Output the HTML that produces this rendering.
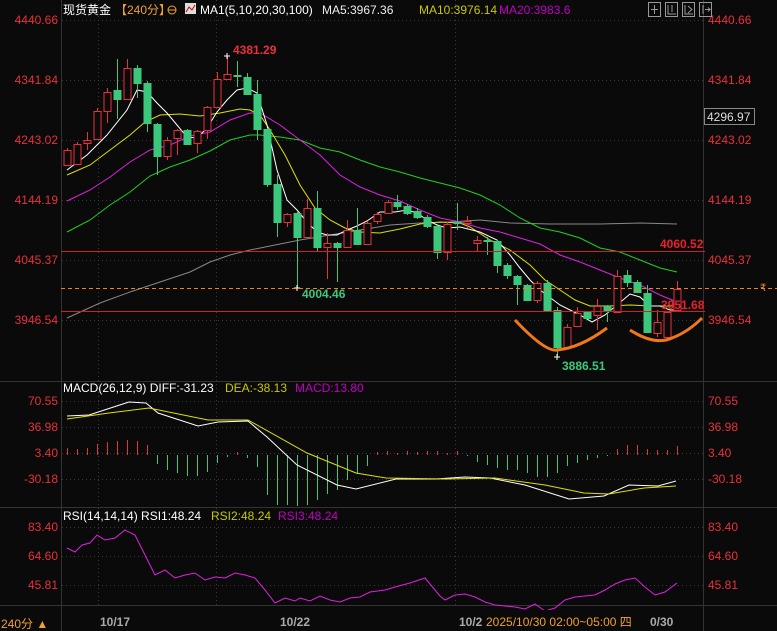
<!DOCTYPE html>
<html><head><meta charset="utf-8"><style>
html,body{margin:0;padding:0;background:#0a0a0a;overflow:hidden}
#c{position:relative;width:777px;height:631px;font-family:"Liberation Sans","Noto Sans CJK SC",sans-serif}
svg{position:absolute;left:0;top:0}
</style></head><body><div id="c">
<svg id="s" width="777" height="631" xmlns="http://www.w3.org/2000/svg" font-family="Liberation Sans, Noto Sans CJK SC, sans-serif">
<rect width="777" height="631" fill="#0a0a0a"/>
<g id="grid" stroke="#3a3a3a" stroke-dasharray="1,3" stroke-width="1"></g>
<g stroke="#333" stroke-width="1">
<line x1="61.5" y1="0" x2="61.5" y2="631"/><line x1="703.5" y1="0" x2="703.5" y2="631"/>
<line x1="0" y1="381.5" x2="777" y2="381.5"/><line x1="0" y1="507.5" x2="777" y2="507.5"/><line x1="0" y1="605.5" x2="777" y2="605.5"/>
</g>
<g id="lines" fill="none" stroke-width="1"></g>
<g id="cand"></g>
<line x1="61" y1="251.5" x2="705" y2="251.5" stroke="#d02020"/>
<line x1="61" y1="311.5" x2="705" y2="311.5" stroke="#d02020"/>
<line x1="61" y1="288.5" x2="777" y2="288.5" stroke="#f08020" stroke-dasharray="4,3"/>
<path d="M515 320 Q545 352 557 350 Q580 348 607 328" stroke="#f07818" stroke-width="3" fill="none"/>
<path d="M630 330 Q655 346 672 338 Q688 332 702 318" stroke="#f07818" stroke-width="3" fill="none"/>
<g id="macd"></g>
<g font-size="12" fill="#e8303c" text-anchor="end">
<text x="58" y="24">4440.66</text><text x="58" y="84">4341.84</text><text x="58" y="144">4243.02</text><text x="58" y="204">4144.19</text><text x="58" y="264">4045.37</text><text x="58" y="324">3946.54</text>
<text x="58" y="405">70.55</text><text x="58" y="431">36.98</text><text x="58" y="457">3.40</text><text x="58" y="483">-30.18</text>
<text x="58" y="531">83.40</text><text x="58" y="560">64.60</text><text x="58" y="589">45.81</text>
</g>
<g font-size="12" fill="#e8303c">
<text x="708" y="24">4440.66</text><text x="708" y="84">4341.84</text><text x="708" y="144">4243.02</text><text x="708" y="204">4144.19</text><text x="708" y="264">4045.37</text><text x="708" y="324">3946.54</text>
<text x="708" y="405">70.55</text><text x="708" y="431">36.98</text><text x="708" y="457">3.40</text><text x="708" y="483">-30.18</text>
<text x="708" y="531">83.40</text><text x="708" y="560">64.60</text><text x="708" y="589">45.81</text>
</g>
<rect x="704.5" y="108.5" width="50" height="16" fill="#0a0a0a" stroke="#888"/>
<text x="707" y="121" font-size="12" fill="#ddd">4296.97</text>
<text x="760" y="291" font-size="10" fill="#f08020">₹</text>
<g font-size="12" font-weight="bold">
<text x="233" y="54" fill="#e8303c">4381.29</text>
<text x="302" y="298" fill="#3cc87c">4004.46</text>
<text x="562" y="370" fill="#3cc87c">3886.51</text>
<text x="660" y="248" fill="#e8202c">4060.52</text>
<text x="661" y="309" fill="#e8202c">3951.68</text>
</g>
<g font-size="12">
<text x="63" y="14" fill="#fff">现货黄金</text><text x="115" y="14" fill="#f0a030">【240分】</text>
<circle cx="172" cy="10" r="4" fill="none" stroke="#f0a030"/><line x1="168" y1="10" x2="176" y2="10" stroke="#f0a030"/>
<rect x="185" y="3" width="11" height="11" fill="#ddd"/><path d="M186 12 L189 7 L192 10 L195 5" stroke="#c00" fill="none"/>
<text x="200" y="14" fill="#fff">MA1(5,10,20,30,100)</text><text x="322" y="14" fill="#eee">MA5:3967.36</text>
<text x="419" y="14" fill="#c8c800">MA10:3976.14</text><text x="499" y="14" fill="#c000c0">MA20:3983.6</text>
<text x="63" y="392" fill="#fff">MACD(26,12,9) DIFF:-31.23</text><text x="225" y="392" fill="#c8c800">DEA:-38.13</text><text x="295" y="392" fill="#c000c0">MACD:13.80</text>
<text x="63" y="520" fill="#fff">RSI(14,14,14) RSI1:48.24</text><text x="211" y="520" fill="#c8c800">RSI2:48.24</text><text x="278" y="520" fill="#c000c0">RSI3:48.24</text>
<text x="1" y="628" fill="#f0a030">240分 ▲</text>
<text x="100" y="626" fill="#aaa" font-weight="bold">10/17</text><text x="280" y="626" fill="#aaa" font-weight="bold">10/22</text><text x="459" y="626" fill="#aaa" font-weight="bold">10/2</text>
<rect x="484" y="610" width="166" height="20" fill="#0a0a0a"/>
<text x="486" y="626" fill="#f0a030">2025/10/30 02:00~05:00 四</text><text x="650" y="626" fill="#aaa" font-weight="bold">0/30</text>
</g>
<g fill="none" stroke="#999">
<rect x="648.5" y="2.5" width="12" height="14"/><rect x="665.5" y="2.5" width="12" height="14"/><rect x="682.5" y="2.5" width="12" height="14"/><rect x="699.5" y="2.5" width="12" height="14"/>
<path d="M654.5 5v9M651 9.5h7M668 5v9h8M672 5v7M685 5v9h8M688 6l4 3.5-4 3.5M703 5v9M705 9.5h5l-2-2M708 11.5l2-2"/>
</g>
</svg></div>
<script>
const NS="http://www.w3.org/2000/svg";
function el(p,t,a){const e=document.createElementNS(NS,t);for(const k in a)e.setAttribute(k,a[k]);document.getElementById(p).appendChild(e);return e;}
[20,80,140,200,260,320,401,427,453,479,527,556,585].forEach(y=>el("grid","line",{x1:62,x2:703,y1:y+.5,y2:y+.5}));
[98,216,455].forEach(x=>el("grid","line",{x1:x+.5,x2:x+.5,y1:0,y2:605}));
function pl(pts,c,w){el("lines","polyline",{points:pts.map(p=>p.join(",")).join(" "),stroke:c,"stroke-width":w||1});}
pl([[67,318],[100,303],[130,292],[160,282],[190,272],[210,262],[230,255],[250,250],[270,246],[300,240],[330,235],[360,230],[390,225],[420,223],[450,222],[480,220],[510,223],[550,224],[600,224],[640,223],[677,224]],"#888");
pl([[67,232],[90,220],[110,205],[130,192],[150,176],[170,167],[190,160],[210,151],[230,140],[250,135],[260,135],[280,137],[300,140],[320,148],[340,152],[360,160],[380,167],[400,172],[420,178],[440,183],[460,188],[480,195],[500,205],[520,218],[540,228],[560,232],[580,238],[600,248],[620,252],[640,260],[660,268],[677,272]],"#20d020");
pl([[67,201],[90,190],[110,177],[130,162],[150,150],[170,145],[190,136],[210,132],[230,120],[250,113],[260,113],[280,125],[300,140],[320,155],[340,175],[360,187],[380,195],[400,201],[420,210],[440,218],[460,222],[480,228],[500,232],[520,238],[540,244],[560,255],[580,262],[600,270],[620,278],[640,285],[660,295],[677,302]],"#e020e0");
pl([[67,175],[90,165],[110,150],[130,135],[145,122],[160,115],[180,114],[200,116],[220,113],[240,109],[250,110],[260,115],[270,130],[285,155],[300,185],[315,208],[330,220],[345,228],[360,232],[380,233],[400,229],[420,224],[440,222],[460,223],[470,227],[490,240],[510,250],[530,265],[545,280],[560,290],[575,300],[590,306],[610,306],[630,305],[650,306],[670,306],[677,305]],"#e0e000");
pl([[67,170],[87,155],[107,135],[127,110],[137,90],[147,92],[157,103],[167,113],[177,125],[187,137],[197,138],[207,128],[217,112],[227,100],[237,90],[247,88],[257,93],[267,125],[277,170],[287,200],[297,210],[307,222],[317,232],[327,235],[337,235],[347,230],[357,226],[367,221],[380,212],[395,212],[407,210],[417,213],[427,220],[437,225],[447,228],[460,227],[480,232],[497,240],[510,255],[520,268],[530,280],[540,290],[560,305],[580,315],[592,322],[605,315],[617,305],[630,294],[640,297],[650,306],[660,306],[670,310],[677,310]],"#fff");
// x, open, close, high, low (pixel y)
const C=[[67,165,150,148,166],[77,164,144,142,165],[87,143,140,132,150],[97,139,111,108,140],[107,111,92,88,123],[117,90,99,59,119],[127,99,68,59,100],[137,68,83,65,98],[147,83,123,81,132],[157,124,156,123,175],[167,156,140,137,160],[177,138,130,129,155],[187,130,144,129,145],[197,143,131,130,153],[207,130,107,106,139],[217,107,79,72,108],[227,79,74,56,80],[237,75,76,61,87],[247,77,94,73,95],[257,94,129,80,140],[267,129,184,128,187],[277,184,222,175,237],[287,222,214,213,227],[297,213,237,212,288],[307,237,208,199,238],[317,208,247,191,252],[327,247,243,233,279],[337,243,247,242,282],[347,247,230,220,248],[357,230,244,208,245],[367,244,223,221,245],[377,221,214,212,224],[388,213,202,200,214],[397,202,206,195,210],[407,206,213,204,215],[417,211,217,208,219],[427,217,226,215,228],[437,226,252,224,259],[447,252,224,222,260],[457,222,222,203,230],[467,223,221,216,228],[477,243,240,236,252],[487,240,241,237,255],[497,241,265,240,273],[507,265,275,263,279],[517,276,284,275,305],[527,285,300,284,301],[537,300,283,281,303],[547,283,310,280,311],[557,310,347,307,357],[567,347,327,324,348],[577,326,313,307,327],[587,312,318,311,319],[597,315,306,299,330],[607,306,310,305,322],[617,312,276,270,313],[627,275,282,270,287],[637,282,292,280,293],[647,293,332,285,333],[657,333,322,310,337],[667,337,312,311,337],[677,310,289,281,311]];
C.forEach(([x,o,c,h,l])=>{const up=c<o,col=up?"#e8303c":"#3cc87c";
el("cand","line",{x1:x+.5,x2:x+.5,y1:h,y2:Math.min(o,c),stroke:col});
el("cand","line",{x1:x+.5,x2:x+.5,y1:Math.max(o,c),y2:l,stroke:col});
const t=Math.min(o,c),hh=Math.max(1,Math.abs(o-c));
if(up)el("cand","rect",{x:x-3,y:t+.5,width:7,height:hh,fill:"#0a0a0a",stroke:col});
else el("cand","rect",{x:x-3.5,y:t,width:8,height:hh+1,fill:col});});
el("cand","path",{d:"M224 56h6M227 53v6M554 357h6M557 354v6M294 288h6M297 285v6",stroke:"#fff"});
// MACD hist
const H=[[67,448],[77,449],[87,448],[97,444],[107,442],[117,441],[127,440],[137,441],[147,445],[157,464],[167,470],[177,473],[187,476],[197,476],[207,472],[217,463],[227,457],[237,452],[247,458],[257,467],[267,495],[277,505],[287,505],[297,506],[307,505],[317,500],[327,494],[337,490],[347,480],[357,474],[367,466],[377,452],[387,451],[397,453],[407,451],[417,452],[427,451],[437,451],[447,453],[457,451],[467,456],[477,462],[487,465],[497,468],[507,470],[517,470],[527,473],[537,477],[547,477],[557,473],[567,466],[577,463],[587,460],[597,458],[607,456],[617,449],[627,445],[637,445],[647,449],[657,450],[667,450],[677,446]];
H.forEach(([x,y])=>{el("macd","line",{x1:x+.5,x2:x+.5,y1:455,y2:y,stroke:y<455?"#e8303c":"#3cc87c"});});
function mp(p,c){el("macd","polyline",{points:p.map(q=>q.join(",")).join(" "),stroke:c,fill:"none"});}
mp([[67,416],[89,415],[129,402],[146,403],[158,413],[198,426],[218,422],[248,421],[267,437],[297,465],[337,485],[356,489],[396,479],[436,479],[465,477],[490,478],[525,485],[569,499],[604,496],[629,485],[658,486],[676,481]],"#fff");
mp([[67,419],[109,413],[149,408],[208,420],[248,420],[307,453],[356,473],[386,478],[446,479],[495,478],[545,485],[584,493],[609,494],[644,488],[676,486]],"#e0e000");
mp([[67,548],[75,552],[82,545],[90,543],[97,535],[105,540],[115,538],[125,530],[135,535],[145,555],[155,575],[165,570],[175,578],[185,575],[195,573],[205,580],[215,577],[225,578],[235,573],[245,575],[255,578],[265,590],[275,603],[285,598],[295,601],[300,598],[310,601],[320,596],[330,600],[340,602],[350,598],[360,597],[370,592],[385,590],[395,587],[410,583],[425,578],[440,596],[445,600],[455,595],[465,594],[475,597],[485,602],[495,605],[505,606],[515,607],[525,609],[535,604],[545,611],[555,608],[565,600],[575,597],[585,596],[595,595],[605,590],[615,584],[625,580],[635,578],[645,587],[655,595],[665,592],[677,583]],"#e020e0");
</script>
</body></html>
